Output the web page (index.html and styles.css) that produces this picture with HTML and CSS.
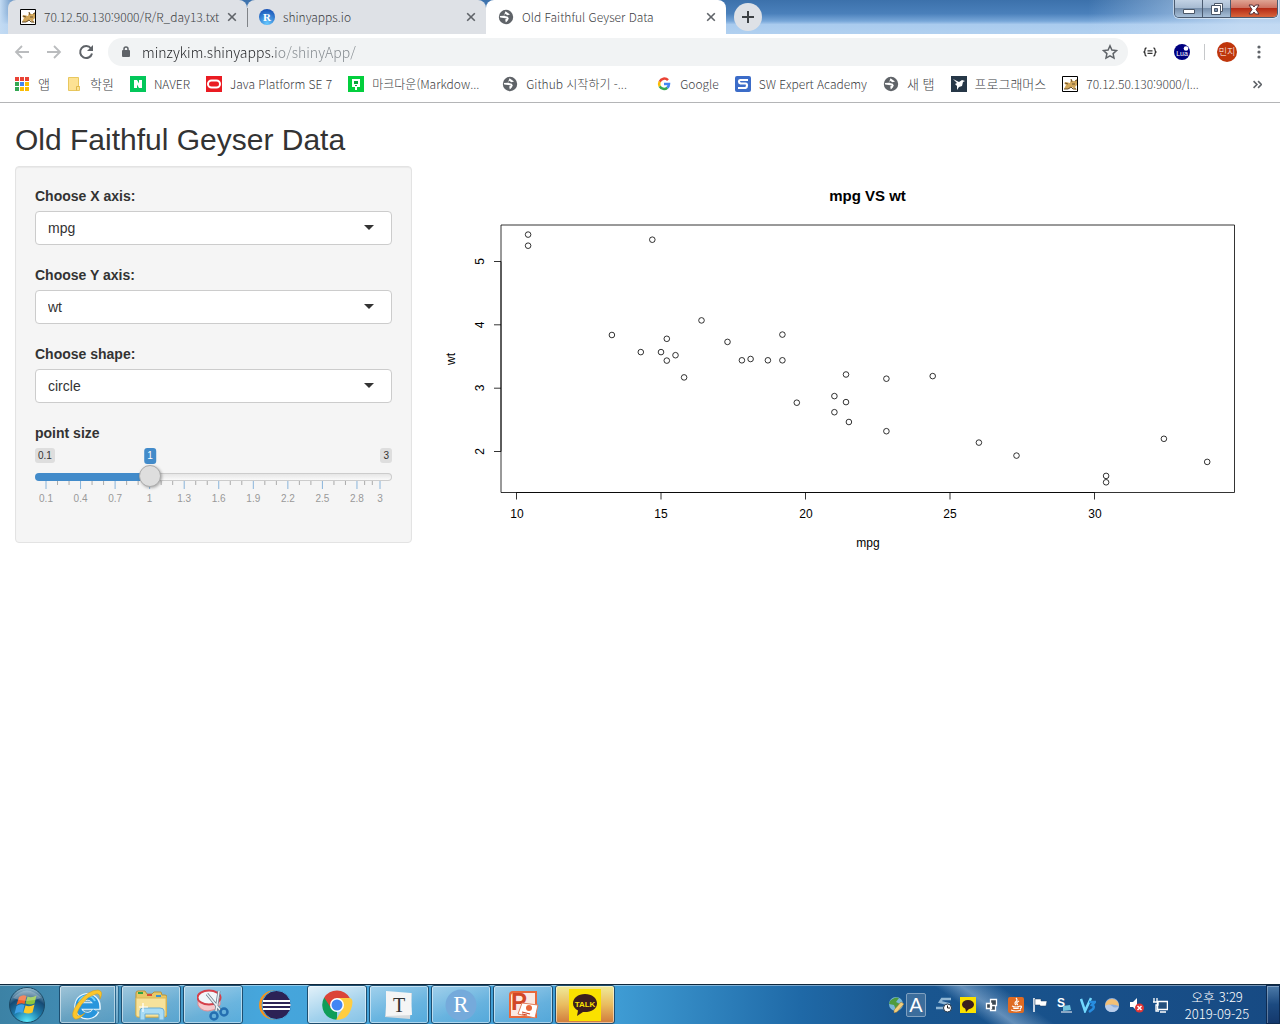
FILE: index.html
```html
<!DOCTYPE html>
<html lang="ko">
<head>
<meta charset="utf-8">
<title>Old Faithful Geyser Data</title>
<link rel="stylesheet" href="styles.css">
</head>
<body>
<svg class="sprites" aria-hidden="true">
  <symbol id="globe" viewBox="0 0 16 16"><circle cx="8" cy="8" r="7.200" fill="#5f6368"/><path d="M7.500 2.200 12 5.500 9.500 6.200 7 4.800 6 6.800l3.800 1 1 1.700-1.200 2.200L7.800 13.600l-.600-3.200L9 9.400 2.200 8.600 1.800 7l4-.200z" fill="#fff"/></symbol>
  <symbol id="tomcat" viewBox="0 0 16 16"><path fill="#fff" stroke="#000" d="M.5.5h15v15H.5z"/><path d="M2 13 4 9 2 7l2-1 4 1 1-4 2 2h2l2-2v6l-2 2 2 3-3-1-2-2-3 2z" fill="#d2a75b"/><path d="M2 13h4l3-2 2 2h3M3 7l3 1M9 3l1 3m3-1 2-1M10 8h3" stroke="#6b5330" fill="none"/></symbol>
  <symbol id="close" viewBox="0 0 10 10"><path d="m1.200 1.200 7.600 7.600m0-7.600L1.200 8.800" stroke="#5f6368" stroke-width="1.600"/></symbol>
</svg>

<header class="browser">
  <div class="titlebar">
    <div class="tabs">
      <div class="tab tab-first"><svg class="icon"><use href="#tomcat"/></svg><span class="tab-name">70.12.50.130:9000/R/R_day13.txt</span><button class="tab-close" aria-label="닫기"><svg><use href="#close"/></svg></button></div>
      <div class="tab tab-second"><svg class="icon" viewBox="0 0 16 16"><defs><radialGradient id="rs" cx=".5" cy=".9" r=".9"><stop stop-color="#65c8ff"/><stop offset="1" stop-color="#1650b5"/></radialGradient></defs><circle cx="8" cy="8" r="8" fill="url(#rs)"/><text x="8" y="12" class="glyph-r">R</text></svg><span class="tab-name">shinyapps.io</span><button class="tab-close" aria-label="닫기"><svg><use href="#close"/></svg></button></div>
      <div class="tab tab-active"><svg class="icon"><use href="#globe"/></svg><span class="tab-name">Old Faithful Geyser Data</span><button class="tab-close" aria-label="닫기"><svg><use href="#close"/></svg></button></div>
    </div>
    <button class="new-tab" aria-label="새 탭"><svg viewBox="0 0 14 14"><path d="M7 1v12M1 7h12" stroke="#3c4043" stroke-width="2"/></svg></button>
    <div class="window-controls">
      <button class="win-btn" aria-label="최소화"><svg viewBox="0 0 16 16"><path d="M2.500 8.500h11v4h-11z" fill="#fff" stroke="#4a5666"/></svg></button>
      <button class="win-btn" aria-label="이전 크기로"><svg viewBox="0 0 16 16"><path d="M5.500 2.500h8v8h-8z" fill="#fff" stroke="#4a5666"/><path d="M2.500 4.500h9v9h-9z" fill="#fff" stroke="#4a5666"/><path d="M5.500 7.500h3v3h-3z" fill="#7a93b0" stroke="#4a5666"/></svg></button>
      <button class="win-btn win-close" aria-label="창 닫기"><svg viewBox="0 0 16 16"><path d="M3 4h3.500L8 6l1.500-2H13l-3 4.500 3 4.500H9.500L8 11l-1.500 2H3l3-4.500z" fill="#fff" stroke="#553038"/></svg></button>
    </div>
  </div>

  <div class="toolbar">
    <button class="nav-btn" aria-label="뒤로"><svg viewBox="0 0 16 16"><path d="M15 8H2m6-6L2 8l6 6" stroke="#babcbe" stroke-width="1.800" fill="none"/></svg></button>
    <button class="nav-btn" aria-label="앞으로"><svg viewBox="0 0 16 16"><path d="M1 8h13M8 2l6 6-6 6" stroke="#babcbe" stroke-width="1.800" fill="none"/></svg></button>
    <button class="nav-btn" aria-label="새로고침"><svg viewBox="0 0 16 16"><path d="M13 4.500A6 6 0 1 0 14 9.500" stroke="#5f6368" stroke-width="2" fill="none"/><path d="M15 1v6H9z" fill="#5f6368"/></svg></button>
    <div class="omnibox">
      <svg class="lock" viewBox="0 0 10 14"><path d="M3 6V4a2 2 0 0 1 4 0v2" stroke="#5f6368" stroke-width="1.500" fill="none"/><rect x="1" y="5" width="8" height="7" rx="1" fill="#5f6368"/></svg>
      <input class="url" type="text" aria-label="주소" value="minzykim.shinyapps.io/shinyApp/">
      <button class="star" aria-label="북마크"><svg viewBox="0 0 16 16"><path d="m8 1.800 1.900 4.200 4.600.500-3.400 3.100.900 4.500L8 11.800l-4 2.300.900-4.500L1.500 6.500 6.100 6z" fill="none" stroke="#5f6368" stroke-width="1.500"/></svg></button>
    </div>
    <div class="extensions">
      <button class="ext" aria-label="JSON"><svg viewBox="0 0 16 16"><path d="M4.500 4Q3 4 3 6t-1.500 2Q3 8 3 10t1.500 2M11.500 4Q13 4 13 6t1.500 2Q13 8 13 10t-1.500 2M5.500 6.800h5m-5 2.500h5" stroke="#333" stroke-width="1.300" fill="none"/></svg></button>
      <button class="ext" aria-label="Lua"><svg viewBox="0 0 16 16"><circle cx="8" cy="8" r="8" fill="#000080"/><circle cx="12" cy="4.500" r="2.300" fill="#fff"/><text x="8" y="12" class="glyph-lua">Lua</text></svg></button>
      <span class="divider"></span>
      <button class="avatar">민지</button>
      <button class="menu" aria-label="메뉴"><svg viewBox="0 0 4 16"><circle cx="2" cy="3" r="1.600" fill="#5f6368"/><circle cx="2" cy="8" r="1.600" fill="#5f6368"/><circle cx="2" cy="13" r="1.600" fill="#5f6368"/></svg></button>
    </div>
  </div>

  <nav class="bookmarks">
    <a href="#" class="bookmark hangul"><svg class="icon" viewBox="0 0 16 16"><path d="M1 1h4v4H1zM6 1h4v4H6zM11 1h4v4h-4z" fill="#ea4335"/><path d="M1 6h4v4H1z" fill="#34a853"/><path d="M6 6h4v4H6z" fill="#4285f4"/><path d="M11 6h4v4h-4zM6 11h4v4H6zM11 11h4v4h-4z" fill="#fbbc04"/><path d="M1 11h4v4H1z" fill="#34a853"/></svg><span>앱</span></a>
    <a href="#" class="bookmark hangul"><svg class="icon" viewBox="0 0 16 16"><path d="M2.500 1.500h10v9h1v4h-11z" fill="#fde293" stroke="#e8c75e"/><path d="M10.500 14.500v-4h3" fill="none" stroke="#e0b84a"/></svg><span>학원</span></a>
    <a href="#" class="bookmark"><svg class="icon" viewBox="0 0 16 16"><path d="M0 0h16v16H0z" fill="#03c75a"/><path d="M4 4h3l2 3.500V4h3v8H9L7 8.500V12H4z" fill="#fff"/></svg><span>NAVER</span></a>
    <a href="#" class="bookmark"><svg class="icon" viewBox="0 0 16 16"><path d="M0 0h16v16H0z" fill="#ea1b22"/><rect x="2" y="4.500" width="12" height="7" rx="3.500" fill="none" stroke="#fff" stroke-width="2"/></svg><span>Java Platform SE 7</span></a>
    <a href="#" class="bookmark clipped"><svg class="icon" viewBox="0 0 16 16"><path d="M0 0h16v16H0z" fill="#03cf3d"/><path d="M4 3h8v8H9v3H7v-3H4z" fill="#fff"/><path d="M6 5h4v3H6zM7 9h2v1H7z" fill="#03a737"/></svg><span>마크다운(Markdow...</span></a>
    <a href="#" class="bookmark clipped"><svg class="icon"><use href="#globe"/></svg><span>Github 시작하기 -...</span></a>
    <a href="#" class="bookmark"><svg class="icon" viewBox="0 0 16 16"><g fill="none" stroke-width="2.500"><path d="M12 4.200A5 5 0 0 0 3.700 5.700" stroke="#ea4335"/><path d="M3.700 5.700a5 5 0 0 0 0 4.700" stroke="#fbbc04"/><path d="M3.700 10.400A5 5 0 0 0 11.300 11.700" stroke="#34a853"/><path d="M11.300 11.700A5 5 0 0 0 13 8H8" stroke="#4285f4"/></g></svg><span>Google</span></a>
    <a href="#" class="bookmark"><svg class="icon" viewBox="0 0 16 16"><rect width="16" height="16" rx="2" fill="#3c6cc8"/><path d="M13 4H5Q4 4 4 5.500T5.500 7.500h5Q12 7.500 12 9.500T10.500 12H3" fill="none" stroke="#fff" stroke-width="2.200"/></svg><span>SW Expert Academy</span></a>
    <a href="#" class="bookmark hangul"><svg class="icon"><use href="#globe"/></svg><span>새 탭</span></a>
    <a href="#" class="bookmark hangul"><svg class="icon" viewBox="0 0 16 16"><path d="M0 0h16v16H0z" fill="#263747"/><path d="m2 3 6 3 3-2 3 1-2 1-1 4-3 1-2 3v-4L4 8l2-1z" fill="#fff"/></svg><span>프로그래머스</span></a>
    <a href="#" class="bookmark clipped"><svg class="icon"><use href="#tomcat"/></svg><span>70.12.50.130:9000/l...</span></a>
    <button class="more" aria-label="북마크 더보기"><svg viewBox="0 0 8 8"><path d="m.500 1 3 3-3 3M4.500 1l3 3-3 3" stroke="#5f6368" stroke-width="1.400" fill="none"/></svg></button>
  </nav>
</header>

<main class="page">
  <h2 class="title">Old Faithful Geyser Data</h2>
  <div class="columns">
    <form class="well">
      <div class="field"><label for="x-axis">Choose X axis:</label><div class="select-box"><select id="x-axis"><option>mpg</option></select></div></div>
      <div class="field"><label for="y-axis">Choose Y axis:</label><div class="select-box"><select id="y-axis"><option>wt</option></select></div></div>
      <div class="field"><label for="shape">Choose shape:</label><div class="select-box"><select id="shape"><option>circle</option></select></div></div>
      <div class="slider-field">
        <label for="size">point size</label>
        <div class="bounds"><span class="bound">0.1</span><span class="bound">3</span><output class="bound current" for="size" style="left:32.2%">1</output></div>
        <input id="size" class="range" type="range" min="0.1" max="3" step="0.1" value="1" style="--fill:32.2%">
        <svg class="grid" aria-hidden="true">
          <g stroke="#999" stroke-opacity=".8">
            <line x1="3.45%" x2="3.45%" y2="4"/><line x1="6.9%" x2="6.9%" y2="4"/><line x1="13.79%" x2="13.79%" y2="4"/><line x1="17.24%" x2="17.24%" y2="4"/><line x1="24.14%" x2="24.14%" y2="4"/><line x1="27.59%" x2="27.59%" y2="4"/><line x1="34.48%" x2="34.48%" y2="4"/><line x1="37.93%" x2="37.93%" y2="4"/><line x1="44.83%" x2="44.83%" y2="4"/><line x1="48.28%" x2="48.28%" y2="4"/><line x1="55.17%" x2="55.17%" y2="4"/><line x1="58.62%" x2="58.62%" y2="4"/><line x1="65.52%" x2="65.52%" y2="4"/><line x1="68.97%" x2="68.97%" y2="4"/><line x1="75.86%" x2="75.86%" y2="4"/><line x1="79.31%" x2="79.31%" y2="4"/><line x1="86.21%" x2="86.21%" y2="4"/><line x1="89.66%" x2="89.66%" y2="4"/><line x1="95.4%" x2="95.4%" y2="4"/><line x1="97.7%" x2="97.7%" y2="4"/>
          </g>
          <g stroke="#428bca" stroke-opacity=".6">
            <line y2="8"/><line x1="10.34%" x2="10.34%" y2="8"/><line x1="20.69%" x2="20.69%" y2="8"/><line x1="31.03%" x2="31.03%" y2="8"/><line x1="41.38%" x2="41.38%" y2="8"/><line x1="51.72%" x2="51.72%" y2="8"/><line x1="62.07%" x2="62.07%" y2="8"/><line x1="72.41%" x2="72.41%" y2="8"/><line x1="82.76%" x2="82.76%" y2="8"/><line x1="93.1%" x2="93.1%" y2="8"/><line x1="100%" x2="100%" y2="8"/>
          </g>
          <g class="grid-text"><text x="0" y="21">0.1</text><text x="10.34%" y="21">0.4</text><text x="20.69%" y="21">0.7</text><text x="31.03%" y="21">1</text><text x="41.38%" y="21">1.3</text><text x="51.72%" y="21">1.6</text><text x="62.07%" y="21">1.9</text><text x="72.41%" y="21">2.2</text><text x="82.76%" y="21">2.5</text><text x="93.1%" y="21">2.8</text><text x="100%" y="21">3</text></g>
        </svg>
      </div>
    </form>

    <svg class="plot" viewBox="0 0 823 400" role="img" aria-label="mpg VS wt">
      <text class="plot-title" x="425.500" y="35">mpg VS wt</text>
      <path class="frame" d="M59 59H792.500V326.500H59z"/>
      <path class="axis" d="M59 95.500V285.500M59 95.500h-7M59 158.800h-7M59 222.200h-7M59 285.500h-7M74.500 326.500h578M74.500 326.500v7M219 326.500v7M363.500 326.500v7M508 326.500v7M652.500 326.500v7"/>
      <g class="axis-text">
        <text x="75" y="352">10</text><text x="219" y="352">15</text><text x="364" y="352">20</text><text x="508" y="352">25</text><text x="653" y="352">30</text>
        <text transform="translate(42 95.500) rotate(-90)">5</text><text transform="translate(42 159) rotate(-90)">4</text><text transform="translate(42 222) rotate(-90)">3</text><text transform="translate(42 285.500) rotate(-90)">2</text>
        <text x="426" y="381">mpg</text><text transform="translate(13 193) rotate(-90)">wt</text>
      </g>
      <g class="points">
        <circle cx="392.400" cy="246.200" r="2.800"/><circle cx="392.400" cy="230.100" r="2.800"/><circle cx="444.400" cy="265.200" r="2.800"/><circle cx="404" cy="208.500" r="2.800"/><circle cx="325.900" cy="194.300" r="2.800"/><circle cx="308.600" cy="193" r="2.800"/><circle cx="198.800" cy="186.100" r="2.800"/><circle cx="490.700" cy="210.100" r="2.800"/>
        <circle cx="444.400" cy="212.700" r="2.800"/><circle cx="340.400" cy="194.300" r="2.800"/><circle cx="299.900" cy="194.300" r="2.800"/><circle cx="259.500" cy="154.400" r="2.800"/><circle cx="285.500" cy="175.900" r="2.800"/><circle cx="224.800" cy="172.800" r="2.800"/><circle cx="86.100" cy="79.700" r="2.800"/><circle cx="86.100" cy="68.600" r="2.800"/>
        <circle cx="210.300" cy="73.700" r="2.800"/><circle cx="721.900" cy="272.800" r="2.800"/><circle cx="664.100" cy="309.900" r="2.800"/><circle cx="765.200" cy="295.900" r="2.800"/><circle cx="406.900" cy="256" r="2.800"/><circle cx="233.500" cy="189.200" r="2.800"/><circle cx="224.800" cy="194.600" r="2.800"/><circle cx="169.900" cy="169" r="2.800"/>
        <circle cx="340.400" cy="168.600" r="2.800"/><circle cx="574.500" cy="289.600" r="2.800"/><circle cx="536.900" cy="276.600" r="2.800"/><circle cx="664.100" cy="316.300" r="2.800"/><circle cx="242.100" cy="211.400" r="2.800"/><circle cx="354.800" cy="236.700" r="2.800"/><circle cx="219" cy="186.100" r="2.800"/><circle cx="404" cy="236.100" r="2.800"/>
      </g>
    </svg>
  </div>
</main>

<footer class="taskbar">
  <button class="start" aria-label="시작"><svg viewBox="0 0 38 38"><defs><radialGradient id="orb" cx=".5" cy="1" r="1"><stop stop-color="#5ff0ff"/><stop offset=".4" stop-color="#1f7fae"/><stop offset=".7" stop-color="#164a74"/><stop offset="1" stop-color="#9fc4d6"/></radialGradient></defs><circle cx="19" cy="19" r="17.500" fill="url(#orb)" stroke="#1b4a66"/><path d="M11 11q4-3 7.500-1l-2 8q-4-2-8 1z" fill="#f0602a"/><path d="M19.500 10.500q4 2 9-1l-2 8q-4 2-9 0z" fill="#8cc63e"/><path d="M8.500 20q4-3 8-1l-2 8q-4-2-8 1z" fill="#3fa0e6"/><path d="M17.500 19.500q4 2 9-1l-2 8q-4 2-9 0z" fill="#fdc928"/><path d="M5 12Q19-3 33 12q-14 6-28 0z" fill="#fff" opacity=".25"/></svg></button>
  <div class="apps">
    <button class="app app-open app-stack" aria-label="Internet Explorer"><svg viewBox="0 0 32 32"><path d="M25 21.500a9.500 9.500 0 1 1 1-4.500H9" fill="none" stroke="#e6f6ff" stroke-width="7.500"/><path d="M24.500 21.500a9.200 9.200 0 1 1 1-4.500H9" fill="none" stroke="#2795dc" stroke-width="5.500"/><path d="M8 13q2-6 8-6t8 5" fill="none" stroke="#6fd0fa" stroke-width="2"/><path d="M4 30Q-2 26 7 14 17 1 27 1q6 1 2 9 0-6-4-5-8 2-14 10-7 10-4 12 3 0 7-3-6 7-10 6z" fill="#fbc62c" stroke="#d99a10" stroke-width=".500"/></svg></button>
    <button class="app app-open" aria-label="Windows 탐색기"><svg viewBox="0 0 32 32"><path d="M1 4q0-2 2-2h7l2 3h5l2-2h7l1 3h3q2 0 2 2v18q0 2-2 2H3q-2 0-2-2z" fill="#e8c866" stroke="#b8933a"/><path d="M3 3h5v2H3z" fill="#2ea344"/><path d="M12 5h5v2h-5z" fill="#d94e35"/><path d="M21 6h5v2h-5z" fill="#3a94d0"/><path d="M1 9h30v17q0 2-2 2H3q-2 0-2-2z" fill="#f7e29b" stroke="#d9b85a"/><path d="M5 31V22q0-3 3-3h17q4 0 4 3v9h-5v-6H10v6z" fill="#a9dcf5" stroke="#6badd5"/><path d="M8 14v9M4 18h9" stroke="#fff" stroke-width="1.200"/></svg></button>
    <button class="app app-open" aria-label="캡처 도구"><svg viewBox="0 0 32 32"><path d="M1 8v8q3 6 10 6t12-6V8z" fill="#f5c9cc" stroke="#e38d94"/><ellipse cx="12" cy="8.500" rx="11.500" ry="7" fill="#f2f6fa" stroke="#d5404a" stroke-width="2"/><path d="m10 5 14 17M22 2 19 22" stroke="#71818d" stroke-width="3"/><path d="m10 5 14 17M22 2 19 22" stroke="#e8eff4" stroke-width="1.500"/><circle cx="17" cy="27" r="3.500" fill="none" stroke="#246fb1" stroke-width="2.500"/><circle cx="27" cy="23" r="3.500" fill="none" stroke="#246fb1" stroke-width="2.500"/></svg></button>
    <button class="app" aria-label="Eclipse"><svg viewBox="0 0 32 32"><circle cx="14.500" cy="16" r="14.500" fill="#f7941e"/><circle cx="17.500" cy="16" r="14.500" fill="#2c2255" stroke="#46a4db" stroke-width="1"/><path d="M4 12h27M3.500 16h28M4 20h27" stroke="#fff" stroke-width="2"/></svg></button>
    <button class="app app-open app-active" aria-label="Chrome"><svg viewBox="0 0 32 32"><path d="M16 16v14.800A14.800 14.800 0 0 1 3.200 8.600z" fill="#0f9d58"/><path d="M16 9h12.800a14.800 14.800 0 0 0-25.600-.400L10 19z" fill="#db4437"/><path d="m22 19-7 11.800q11 .5 14.800-10T28.900 9H16z" fill="#ffcd40"/><circle cx="16" cy="16" r="7" fill="#fff"/><circle cx="16" cy="16" r="5.500" fill="#4285f4"/></svg></button>
    <button class="app app-open" aria-label="Typora"><svg viewBox="0 0 32 32"><path d="m4 5 25-1-2 26-25-2z" fill="#d5dbdf"/><path d="m3 2 25 2 1 22-26 1z" fill="#f5f5f5"/><text x="16" y="23" class="glyph-t">T</text></svg></button>
    <button class="app app-open" aria-label="RStudio"><svg viewBox="0 0 32 32"><circle cx="16" cy="16" r="15.500" fill="#75aadb"/><text x="16" y="23" class="glyph-rs">R</text></svg></button>
    <button class="app app-open" aria-label="PowerPoint"><svg viewBox="0 0 32 32"><path d="M2 6q0-4 4-4h24v27H2z" fill="#e8683a"/><path d="M4 7q0-3 3-3h21v23H4z" fill="#fbe9e2"/><text x="12" y="21" class="glyph-p">P</text><path d="m15 14 16 2-3 13-17-4z" fill="#fff" stroke="#e27d58"/><circle cx="22" cy="19" r="3" fill="#e8683a"/><path d="m15 23 8 2m-8 0 5 1" stroke="#d24726" stroke-width="1.200"/></svg></button>
    <button class="app app-open app-alert" aria-label="카카오톡"><svg viewBox="0 0 32 32"><path d="M0 0h32v32H0z" fill="#fae100"/><path d="M16 5C9 5 4 9 4 14.500c0 3 2 5.500 5 7l-1 5.500 6-4c8 .5 14-3 14-8.500S23 5 16 5z" fill="#3c1e1e"/><text x="16" y="18" class="glyph-talk">TALK</text></svg></button>
  </div>
  <div class="tray">
    <svg viewBox="0 0 16 16"><circle cx="8" cy="7" r="7" fill="#79b7d9"/><path d="M2 4q5-5 9-3l-3 4 4 2-4 6-2-5-5-1z" fill="#4f9b3f"/><path d="m6 13 7-8 3 2-7 8-3 1z" fill="#f1cf7c" stroke="#8b6b3a" stroke-width=".500"/></svg>
    <span class="ime">A</span>
    <svg viewBox="0 0 16 16"><path d="M15 2H6L4 5l8 2-4 4H0" stroke="#8fb6d4" stroke-width="2.500" fill="none"/><circle cx="11.500" cy="11" r="4" fill="#fff" stroke="#234"/><path d="M11.500 8.500V11H14" stroke="#222" fill="none"/></svg>
    <svg viewBox="0 0 16 16"><path d="M0 0h16v16H0z" fill="#fae100"/><ellipse cx="8" cy="7.500" rx="6" ry="4.500" fill="#3c1e1e"/><path d="m5 10 1 5 4-4z" fill="#3c1e1e"/></svg>
    <svg viewBox="0 0 16 16"><path d="M6.500 2.500h6v6h-6zM2.500 6.500h5v5h-5zM6.500 8.500h5v5h-5z" fill="#3d4852" stroke="#fff" stroke-width="1.300"/></svg>
    <svg viewBox="0 0 16 16"><rect width="16" height="16" rx="2" fill="#df6b22"/><path d="M8 1q2 2 0 3.500T8 8m3-4Q7 6 10 8M4 9q4 2 8 0m-7 2q3 1 6 0m-8 2q5 2 10 0M12 9q3 0 0 3" stroke="#fff" stroke-width="1.200" fill="none"/></svg>
    <svg viewBox="0 0 16 16"><path d="M2 1v14" stroke="#fff" stroke-width="1.500"/><path d="M3 2h6v2h6l-1 5H8V8H3z" fill="#fff" stroke="#223d5e" stroke-width=".500"/></svg>
    <svg viewBox="0 0 16 16"><text x="5" y="10" class="glyph-s">S</text><path d="m7 9 7-1 1 5-8 1z" fill="#71c3dd"/><path d="M5 15h11" stroke="#fff"/></svg>
    <svg viewBox="0 0 16 16"><path d="m1 2 4 12L11 1" fill="none" stroke="#72d9ff" stroke-width="2.500"/><path d="M9 5h6l-3 3q3 1 1 4l-4 3" fill="none" stroke="#278de0" stroke-width="2.500"/></svg>
    <svg viewBox="0 0 16 16"><circle cx="8" cy="8" r="7" fill="#8eaedc"/><path d="M1 9a7 7 0 1 1 14 0Q8 6 1 9z" fill="#f3c075"/><path d="M1 9q4-3 7 0t7 0q-1 6-7 6T1 9z" fill="#b9cdea"/></svg>
    <svg viewBox="0 0 16 16"><path d="M2 5h3l4-4v13L5 10H2z" fill="#fff"/><circle cx="11.500" cy="11" r="4.500" fill="#e03434"/><path d="m9.500 9 4 4m0-4-4 4" stroke="#fff" stroke-width="1.500"/></svg>
    <svg viewBox="0 0 16 16"><path d="M5.500 4.500h10v8h-10z" fill="#244f7c" stroke="#fff" stroke-width="1.500"/><path d="M8 15h6M2 1v4m3-4v4M1 5h5v3H4v6h3" stroke="#fff" stroke-width="1.300" fill="none"/></svg>
  </div>
  <time class="clock" datetime="2019-09-25T15:29"><span>오후 3:29</span><span>2019-09-25</span></time>
  <button class="show-desktop" aria-label="바탕 화면 보기"></button>
</footer>
</body>
</html>
```
FILE: styles.css
```css
* { box-sizing: border-box; }
body { margin: 0; min-height: 100vh; display: flex; flex-direction: column; background: #fff; color: #333; font: 14px/20px "Liberation Sans", Arial, sans-serif; }
button { border: 0; padding: 0; background: none; font: inherit; display: flex; align-items: center; justify-content: center; flex: none; }
svg { flex: none; }
.sprites { position: absolute; width: 0; height: 0; }
.icon { width: 16px; height: 16px; }

.browser { font-family: "Noto Sans CJK KR", sans-serif; font-size: 12px; font-weight: 300; border-bottom: 1px solid #b4b5b7; color: #3c4043; }
.titlebar { display: flex; align-items: flex-start; height: 34px; padding: 0 2px 0 8px; background: linear-gradient(90deg, #c3dbf3 0, transparent 20px, transparent 85%, rgba(200, 221, 244, .8) 97%), linear-gradient(#3c71ab 0, #4a80bb 40%, #77a6d8 62%, #a9cbee 72%, #b1d0f0 100%); }
.tabs { display: flex; }
.tab { display: flex; align-items: center; width: 239px; height: 34px; padding: 0 9px 0 12px; background: #dee1e6; border-radius: 8px 8px 0 0; position: relative; }
.tab-active { width: 240px; background: #fff; }
.tab-second::before { content: ""; position: absolute; left: 0; top: 8px; width: 1px; height: 19px; background: #808388; }
.tab-name { flex: 1; margin-left: 8px; white-space: nowrap; }
.tab-close { width: 12px; height: 12px; }
.tab-close svg { width: 10px; height: 10px; }
.new-tab { width: 28px; height: 28px; margin: 3px 0 0 8px; border-radius: 50%; background: #dee1e6; }
.new-tab svg { width: 14px; height: 14px; }
.window-controls { display: flex; margin-left: auto; border: 1px solid #4b5b70; border-top: 0; border-radius: 0 0 5px 5px; overflow: hidden; box-shadow: 0 0 0 1px rgba(255, 255, 255, .5); }
.win-btn { width: 28px; height: 17px; background: linear-gradient(#c2d2e4, #a5b9d0 50%, #7890ac 50%, #a7bfd8); border-right: 1px solid #4b5b70; }
.win-btn svg { width: 16px; height: 16px; }
.win-close { width: 46px; border-right: 0; background: linear-gradient(#dfa494, #cb6d5c 50%, #b52b16 50%, #d8653c); }

.toolbar { display: flex; align-items: center; height: 36px; padding: 0 19px 0 14px; }
.nav-btn { width: 16px; height: 16px; margin-right: 16px; }
.nav-btn svg { width: 16px; height: 16px; }
.omnibox { flex: 1; display: flex; align-items: center; height: 28px; margin-right: 14px; margin-left: -2px; padding: 0 10px 0 13px; border-radius: 14px; background: #f1f3f4; }
.lock { width: 10px; height: 14px; }
.url { flex: 1; min-width: 0; margin-left: 11px; padding: 0; border: 0; outline: 0; font-family: inherit; font-weight: 300; font-size: 14px; height: 24px; background: linear-gradient(90deg, #202124 134px, #80868b 134px); -webkit-background-clip: text; background-clip: text; -webkit-text-fill-color: transparent; }
.star svg { width: 16px; height: 16px; }
.extensions { display: flex; align-items: center; gap: 16px; }
.ext svg { width: 16px; height: 16px; }
.divider { width: 1px; height: 16px; margin: 0 -4px 0 -2px; background: #c6c8ca; }
.avatar { width: 20px; height: 20px; margin-right: 4px; border-radius: 50%; background: #bf360c; color: #fff; font-size: 9px; }
.menu svg { width: 4px; height: 16px; }

.bookmarks { display: flex; align-items: center; height: 28px; margin-bottom: 4px; padding: 0 18px 0 14px; }
.bookmark { display: flex; align-items: center; gap: 8px; margin-right: 16px; color: #3c4043; text-decoration: none; white-space: nowrap; }
.hangul { font-size: 13px; }
.clipped span { min-width: 114px; }
.more { margin-left: auto; }
.more svg { width: 9px; height: 9px; }

.page { flex: 1; padding: 20px 15px 0; }
.title { margin: 0 0 10px; font-size: 30px; line-height: 33px; font-weight: 400; }
.columns { display: grid; grid-template-columns: minmax(0, 397fr) minmax(0, 823fr); gap: 30px; align-items: start; }
.well { display: flex; flex-direction: column; gap: 20px; padding: 19px; border: 1px solid #e3e3e3; border-radius: 4px; background: #f5f5f5; box-shadow: inset 0 1px 1px rgba(0, 0, 0, .05); }
label { display: block; margin-bottom: 5px; font-weight: 700; }
.select-box { position: relative; }
.select-box::after { content: ""; position: absolute; right: 18px; top: 14px; border: 5px solid transparent; border-top-color: #333; border-bottom: 0; pointer-events: none; }
select { appearance: none; display: block; width: 100%; height: 34px; padding: 0 12px; border: 1px solid #ccc; border-radius: 4px; background: #fff; color: #333; font: inherit; }
.slider-field { padding-bottom: 15px; }
.bounds { display: flex; justify-content: space-between; align-items: flex-start; position: relative; height: 16px; font-size: 10px; }
.bound { padding: 0 3px; line-height: 15px; border-radius: 3px; background: #dedede; color: #333; }
.current { position: absolute; top: 0; transform: translateX(-50%); line-height: 16px; background: #428bca; color: #fff; }
.range { appearance: none; display: block; position: relative; z-index: 1; width: 100%; height: 26px; margin: 0; background: none; }
.range::-webkit-slider-runnable-track { height: 8px; border: 1px solid transparent; border-radius: 8px; background: linear-gradient(90deg, #428bca var(--fill), transparent var(--fill)) border-box, linear-gradient(#e6e6e6, #fafafa) padding-box, linear-gradient(#ccc, #ccc) border-box; }
.range::-webkit-slider-thumb { appearance: none; width: 22px; height: 22px; margin-top: -9px; border: 1px solid #ababab; border-radius: 50%; background: #dedede; box-shadow: 1px 1px 3px rgba(0, 0, 0, .3); }
.grid { display: block; width: calc(100% - 23px); height: 27px; margin: -9px 0 0 11px; overflow: visible; }
.grid-text { font-size: 10px; fill: #999; text-anchor: middle; }

.plot { display: block; width: 100%; height: auto; }
.plot text { fill: #000; text-anchor: middle; font-size: 12px; }
.plot .plot-title { font-size: 15px; font-weight: 700; }
.frame, .axis, .points { fill: none; stroke: #000; stroke-width: .8px; }

.taskbar { display: flex; align-items: stretch; height: 40px; border-top: 1px solid #10283c; box-shadow: inset 0 1px 0 rgba(255, 255, 255, .4); color: #fff; background: linear-gradient(35deg, transparent 74%, rgba(190, 215, 240, .45) 76%, transparent 79%), linear-gradient(90deg, #3c82a5 0, #438fb9 100px, #46a6dc 260px, #3e9bd3 620px, #1f69a7 800px, #195690 900px, #174a83 100%); }
.start { width: 54px; }
.start svg { width: 38px; height: 38px; }
.apps { display: flex; gap: 2px; margin-left: 5px; }
.app { width: 60px; border-radius: 3px; }
.app svg { width: 32px; height: 32px; }
.app-open { border: 1px solid #1d4e70; box-shadow: inset 0 0 0 1px rgba(255, 255, 255, .5); background: linear-gradient(160deg, rgba(255, 255, 255, .5), rgba(255, 255, 255, .2) 60%, rgba(255, 255, 255, .1)); }
.app-stack { padding-right: 2px; border-right: 4px double #2a688f; }
.app-active { background: linear-gradient(160deg, rgba(255, 255, 255, .85), rgba(255, 255, 255, .5) 60%, rgba(255, 255, 255, .35)); }
.app-alert { background: linear-gradient(#f0ea9a, #e9bd60 50%, #d07a3c); }
.tray { display: flex; align-items: center; gap: 8px; margin-left: auto; }
.tray svg { width: 16px; height: 16px; }
.ime { width: 20px; margin: 0 2px 0 -6px; border: 1px solid #7fa0c0; border-radius: 2px; background: #3c6d9c; font: 20px/22px "Liberation Sans", sans-serif; text-align: center; }
.clock { display: flex; flex-direction: column; justify-content: center; width: 98px; text-align: center; font: 13px/17px "Noto Sans CJK KR", sans-serif; font-weight: 300; }
.show-desktop { width: 14px; border: 1px solid #0d2b52; box-shadow: inset 1px 1px 0 rgba(255, 255, 255, .3); background: linear-gradient(#4d7ba9, #1c4a80 50%, #14386c); }
.glyph-r, .glyph-lua, .glyph-t, .glyph-rs, .glyph-p, .glyph-talk, .glyph-s { text-anchor: middle; fill: #fff; font-family: "Liberation Serif", serif; font-weight: 400; }
.glyph-r { font-size: 11px; font-weight: 700; }
.glyph-lua { font: 7px "Liberation Sans", sans-serif; }
.glyph-t { font-size: 20px; fill: #333; }
.glyph-rs { font-size: 23px; }
.glyph-p { font: 700 24px "Liberation Sans", sans-serif; fill: #d24726; }
.glyph-talk { font: 700 8px "Liberation Sans", sans-serif; fill: #fae100; }
.glyph-s { font: 700 12px "Liberation Sans", sans-serif; }
```
